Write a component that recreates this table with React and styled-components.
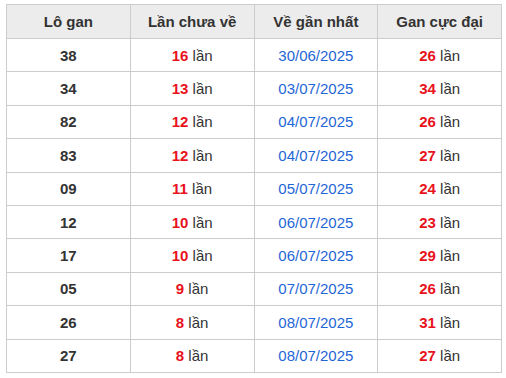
import styled, { createGlobalStyle } from 'styled-components';

const GlobalStyle = createGlobalStyle`
  body {
    margin: 0;
    background: #fff;
    font-family: "Liberation Sans", Arial, sans-serif;
  }
`;

const Wrapper = styled.div`
  padding: 4px 5px 0 6px;
`;

const Table = styled.table`
  width: 496px;
  border-collapse: collapse;
  table-layout: fixed;
  font-size: 15px;
  color: #333;
`;

const HeadCell = styled.th`
  height: 33px;
  padding: 0;
  background: #ececec;
  border: 1px solid #ccc;
  font-weight: bold;
  text-align: center;
  vertical-align: middle;
`;

const Cell = styled.td`
  height: 32.4px;
  padding: 0;
  border: 1px solid #ccc;
  text-align: center;
  vertical-align: middle;
  font-weight: ${(p) => (p.$bold ? 'bold' : 'normal')};
  color: ${(p) => (p.$blue ? '#1f66d6' : '#333')};
`;

const Count = styled.b`
  color: #e8121c;
`;

const rows = [
  ['38', 16, '30/06/2025', 26],
  ['34', 13, '03/07/2025', 34],
  ['82', 12, '04/07/2025', 26],
  ['83', 12, '04/07/2025', 27],
  ['09', 11, '05/07/2025', 24],
  ['12', 10, '06/07/2025', 23],
  ['17', 10, '06/07/2025', 29],
  ['05', 9, '07/07/2025', 26],
  ['26', 8, '08/07/2025', 31],
  ['27', 8, '08/07/2025', 27],
];

export default function App() {
  return (
    <>
      <GlobalStyle />
      <Wrapper>
        <Table>
          <thead>
            <tr>
              <HeadCell>Lô gan</HeadCell>
              <HeadCell>Lần chưa về</HeadCell>
              <HeadCell>Về gần nhất</HeadCell>
              <HeadCell>Gan cực đại</HeadCell>
            </tr>
          </thead>
          <tbody>
            {rows.map(([num, miss, date, max]) => (
              <tr key={num}>
                <Cell $bold>{num}</Cell>
                <Cell>
                  <Count>{miss}</Count> lần
                </Cell>
                <Cell $blue>{date}</Cell>
                <Cell>
                  <Count>{max}</Count> lần
                </Cell>
              </tr>
            ))}
          </tbody>
        </Table>
      </Wrapper>
    </>
  );
}
